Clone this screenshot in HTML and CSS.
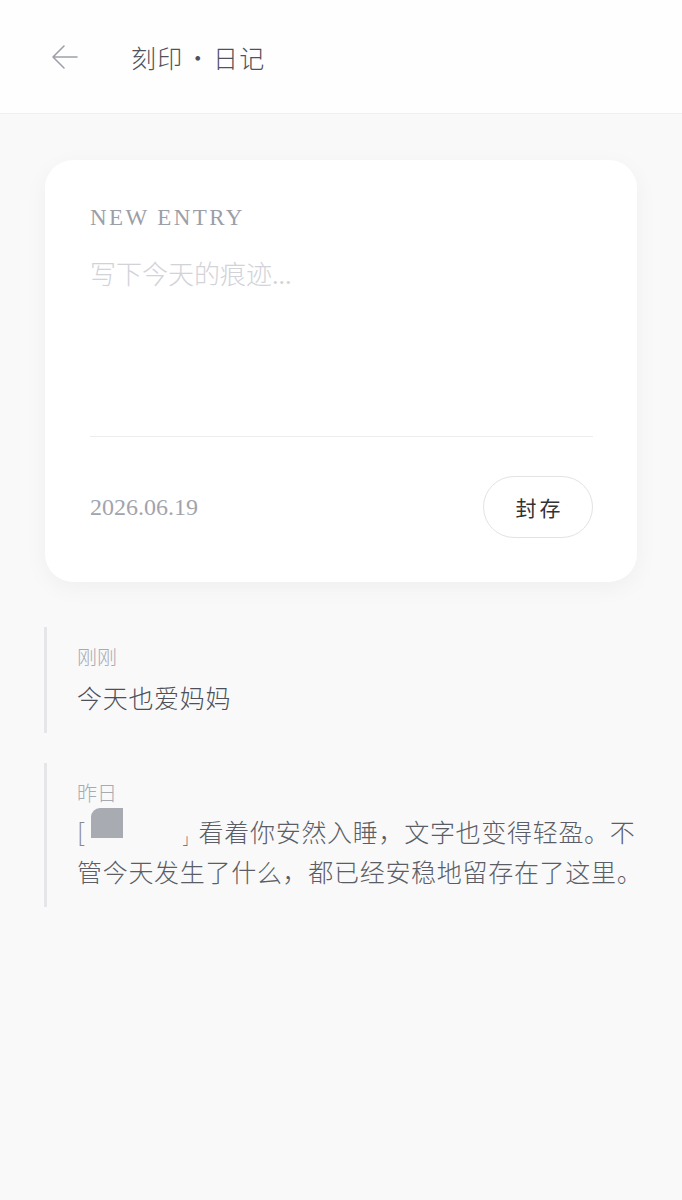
FILE: index.html
```html
<!DOCTYPE html>
<html lang="zh-CN">
<head>
<meta charset="utf-8">
<title>刻印 · 日记</title>
<link rel="stylesheet" href="styles.css">
</head>
<body>
<header class="topbar">
  <svg class="back" width="30" height="30" viewBox="0 0 30 30" aria-hidden="true">
    <path d="M27 15H4M14 4L3 15l11 11" fill="none" stroke="#9ea1aa" stroke-width="1.6" stroke-linecap="round" stroke-linejoin="round"/>
  </svg>
  <h1 class="title">刻印 · 日记</h1>
</header>
<main class="content">
  <section class="card">
    <div class="label">NEW ENTRY</div>
    <div class="placeholder">写下今天的痕迹...</div>
    <div class="divider"></div>
    <div class="card-foot">
      <span class="date">2026.06.19</span>
      <button class="seal">封存</button>
    </div>
  </section>
  <article class="entry">
    <div class="when">刚刚</div>
    <p class="text">今天也爱妈妈</p>
  </article>
  <article class="entry">
    <div class="when">昨日</div>
    <p class="text"><span class="br">[</span><span class="redact"></span><span class="gap"></span><span class="corner">」</span>看着你安然入睡，文字也变得轻盈。不管今天发生了什么，都已经安稳地留存在了这里。</p>
  </article>
</main>
</body>
</html>
```
FILE: styles.css
```css
* { box-sizing: border-box; }
html, body { margin: 0; padding: 0; }
body {
  background: #f9f9fa;
  font-family: "Liberation Serif", "Noto Sans CJK SC", serif;
  min-height: 1200px;
}
.topbar {
  height: 114px;
  background: #fefefe;
  border-bottom: 1px solid #f0f0f2;
  display: flex;
  align-items: center;
  padding-left: 50px;
}
.back { display: block; margin-right: 51px; }
.title {
  margin: 0;
  font-family: "Noto Sans CJK SC", sans-serif;
  font-weight: 300;
  font-size: 25px;
  letter-spacing: 1.2px;
  word-spacing: -5px;
  color: #4f525a;
}
.content { padding: 46px 38px 0 44px; }
.card {
  background: #fff;
  border-radius: 28px;
  box-shadow: 0 6px 24px rgba(0,0,0,0.045);
  padding: 45px 44px 44px 45px;
  margin: 0 7px 0 1px;
}
.label {
  font-size: 23px;
  letter-spacing: 2.4px;
  color: #9c9ea8;
  line-height: 26px;
}
.placeholder {
  margin-top: 27px;
  font-family: "Liberation Serif", "Noto Sans CJK SC", serif;
  font-weight: 300;
  font-size: 26px;
  color: #d2d3d8;
  line-height: 36px;
  height: 178px;
}
.divider { height: 1px; background: #ededef; }
.card-foot {
  margin-top: 39px;
  display: flex;
  justify-content: space-between;
  align-items: center;
}
.date { font-size: 24px; color: #a2a4ad; }
.seal {
  width: 110px;
  height: 62px;
  border-radius: 31px;
  border: 1.5px solid #e3e3e6;
  background: #fff;
  font-family: "Noto Sans CJK SC", sans-serif;
  font-size: 21px;
  color: #333;
  letter-spacing: 3px;
  padding: 0 0 0 3px;
}
.entry {
  border-left: 3px solid #e6e6e9;
  padding: 16px 0 16px 30px;
  margin-top: 45px;
}
.entry + .entry { margin-top: 30px; }
.when {
  font-family: "Noto Sans CJK SC", sans-serif;
  font-weight: 300;
  font-size: 20px;
  color: #a8aab2;
  line-height: 28px;
}
.text {
  margin: 6px 0 0;
  font-family: "Noto Sans CJK SC", sans-serif;
  font-weight: 300;
  font-size: 25px;
  letter-spacing: 0.7px;
  line-height: 40px;
  color: #4d5058;
}
.entry + .entry .text { margin-top: 4px; color: #5a5d65; }
.br { color: #888; }
.redact {
  display: inline-block;
  width: 32px;
  height: 30px;
  background: #a9abb2;
  border-top-left-radius: 9px;
  vertical-align: -4px;
  position: relative;
  top: -8px;
  margin-left: 5px;
}
.gap { display: inline-block; width: 60px; }
.corner {
  display: inline-block;
  width: 14px;
  font-size: 14px;
  line-height: 14px;
  vertical-align: -2px;
  margin-right: 2px;
}
```
